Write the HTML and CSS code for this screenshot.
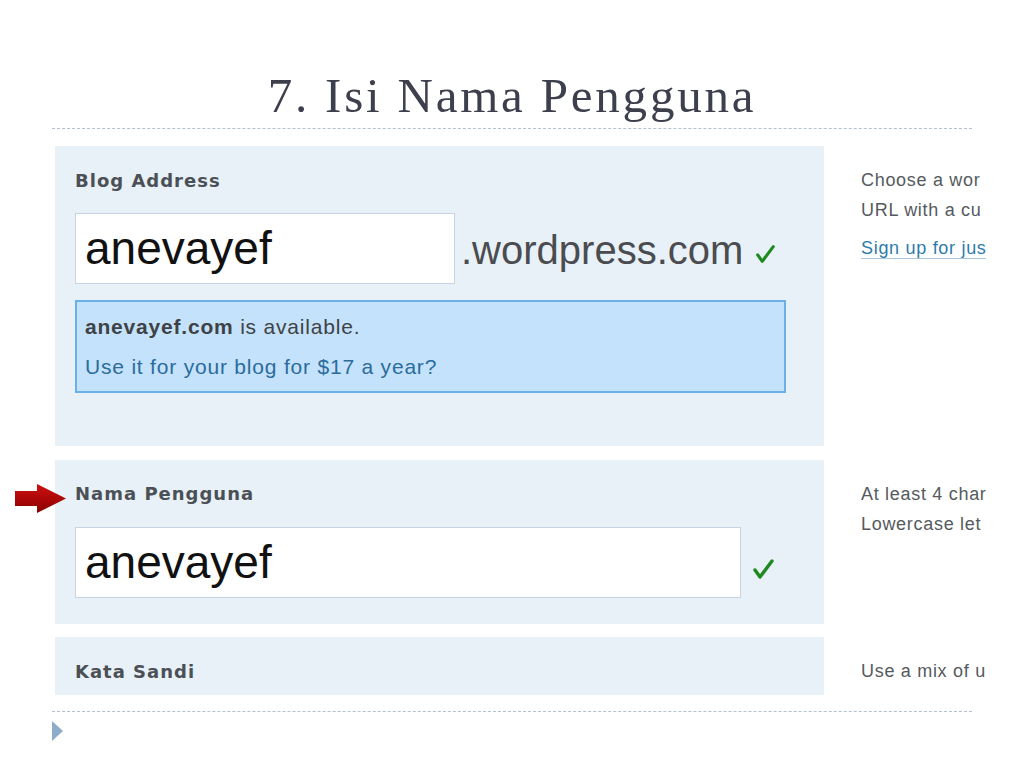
FILE: index.html
```html
<!DOCTYPE html>
<html lang="id">
<head>
    <meta charset="UTF-8">
    <title>7. Isi Nama Pengguna</title>
    <link rel="stylesheet" href="styles.css">
</head>
<body>
    <div class="slide">
        <h1>7. Isi Nama Pengguna</h1>
        <div class="rule"></div>

        <div class="shot">
            <div class="row">
                <div class="panel panel-blog">
                    <div class="label">Blog Address</div>
                    <div class="field-line">
                        <div class="field field-short">anevayef</div>
                        <span class="suffix">.wordpress.com</span>
                        <svg class="tick tick-small" viewBox="0 0 24 24"><path d="M4 13 L9 20 L21 4"/></svg>
                    </div>
                    <div class="notice">
                        <div><b>anevayef.com</b> is available.</div>
                        <div class="notice-link">Use it for your blog for $17 a year?</div>
                    </div>
                </div>
                <div class="note">
                    <div>Choose a wor</div>
                    <div>URL with a cu</div>
                    <div class="note-link"><span>Sign up for jus</span></div>
                </div>
            </div>

            <div class="row">
                <div class="panel panel-user">
                    <div class="label">Nama Pengguna</div>
                    <div class="field-line">
                        <div class="field field-wide">anevayef</div>
                        <svg class="tick" viewBox="0 0 24 24"><path d="M4 13 L9 20 L21 4"/></svg>
                    </div>
                </div>
                <div class="note">
                    <div>At least 4 char</div>
                    <div>Lowercase let</div>
                </div>
            </div>

            <div class="row">
                <div class="panel panel-pass">
                    <div class="label">Kata Sandi</div>
                </div>
                <div class="note">
                    <div>Use a mix of u</div>
                </div>
            </div>
        </div>

        <div class="rule rule-bottom"></div>
        <div class="bullet"></div>

        <!-- pointer arrow drawn over the screenshot -->
        <svg class="arrow" viewBox="0 0 52 30">
            <defs>
                <linearGradient id="red" x1="0" y1="0" x2="0" y2="1">
                    <stop offset="0" stop-color="#d01010"/>
                    <stop offset="1" stop-color="#8a0000"/>
                </linearGradient>
            </defs>
            <path d="M0 7 H22 V0 L51 14.5 L22 29 V22 H0 Z" fill="url(#red)"/>
        </svg>
    </div>
</body>
</html>
```

FILE: styles.css
```css
body {
    margin: 0;
    background: #fff;
    font-family: "Liberation Sans", Arial, sans-serif;
}
.slide {
    position: relative;
    width: 1024px;
    height: 768px;
    overflow: hidden;
}
h1 {
    margin: 68px 0 0;
    height: 56px;
    font-family: "Liberation Serif", "Times New Roman", serif;
    font-weight: normal;
    font-size: 49px;
    line-height: 56px;
    letter-spacing: 2.8px;
    color: #3d3f4d;
    text-align: center;
}
.rule {
    margin: 4px 0 0 52px;
    width: 920px;
    border-top: 1px dashed #b4c0cd;
}
.rule-bottom {
    margin-top: 16px;
}
.shot {
    margin: 17px 0 0 55px;
    height: 549px;
    overflow: hidden;
}
.row {
    display: flex;
    margin-bottom: 14px;
}
.row:nth-child(2) {
    margin-bottom: 13px;
}
.panel {
    width: 769px;
    flex: none;
    background: #e8f0f8;
    box-sizing: border-box;
    padding: 24px 20px 0;
}
.panel-blog { height: 300px; }
.panel-user { height: 164px; padding-top: 23px; }
.panel-pass { height: 80px; }

.label {
    font-family: "DejaVu Sans", Verdana, sans-serif;
    font-weight: bold;
    font-size: 18px;
    line-height: 22px;
    letter-spacing: 1px;
    color: #4b5056;
}
.field-line {
    display: flex;
    align-items: center;
    margin-top: 21px;
}
.panel-user .field-line {
    margin-top: 22px;
}
.field {
    box-sizing: border-box;
    height: 71px;
    border: 1px solid #c6d4e2;
    background: #fff;
    padding-left: 9px;
    font-size: 46px;
    line-height: 69px;
    color: #111;
}
.field-short { width: 380px; }
.field-wide { width: 666px; }
.suffix {
    margin-left: 6px;
    margin-top: 4px;
    font-size: 40px;
    color: #4a4c50;
}
.tick {
    width: 24px;
    height: 24px;
    margin: 12px 0 0 10px;
}
.tick-small {
    width: 22px;
    height: 22px;
    margin: 10px 0 0 11px;
}
.tick path {
    fill: none;
    stroke: #1f8a1f;
    stroke-width: 3.4;
    stroke-linecap: round;
    stroke-linejoin: round;
}
.notice {
    box-sizing: border-box;
    width: 711px;
    height: 93px;
    margin-top: 16px;
    padding: 5px 0 0 8px;
    background: #c4e2fb;
    border: 2px solid #6cb0e8;
    font-size: 21px;
    line-height: 40px;
    letter-spacing: 0.8px;
    color: #3e4246;
}
.notice-link {
    color: #2b6c9c;
}
.note {
    width: 125px;
    flex: none;
    margin-left: 37px;
    padding-top: 19px;
    overflow: hidden;
    white-space: nowrap;
    font-size: 18px;
    line-height: 30px;
    letter-spacing: 0.7px;
    color: #555a5e;
}
.note-link {
    margin-top: 8px;
    color: #2e7bab;
}
.note-link span {
    border-bottom: 1px solid #a9c8de;
}
.bullet {
    margin: 9px 0 0 52px;
    width: 0;
    height: 0;
    border-top: 10px solid transparent;
    border-bottom: 10px solid transparent;
    border-left: 11px solid #8eacca;
}
.arrow {
    position: absolute;
    left: 15px;
    top: 484px;
    width: 52px;
    height: 30px;
}
```
